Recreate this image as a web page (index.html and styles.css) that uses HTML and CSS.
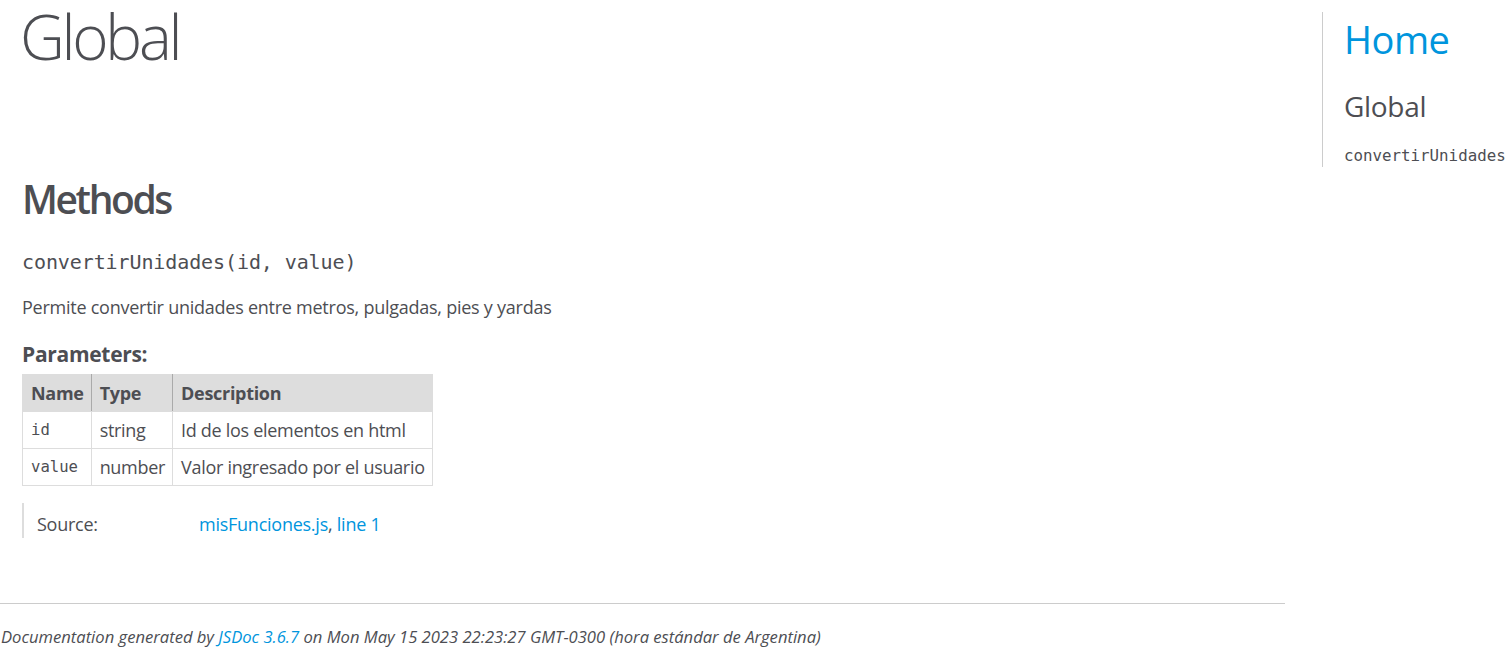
FILE: index.html
```html
<!DOCTYPE html>
<html lang="es">
<head>
<meta charset="utf-8">
<title>JSDoc: Global</title>
<link rel="stylesheet" href="styles.css">
</head>
<body>
<div class="page">
  <div class="main">
    <h1 class="page-title">Global</h1>
    <section class="doc">
      <h3 class="subsection-title">Methods</h3>
      <h4 class="name">convertirUnidades<span class="signature">(id, value)</span></h4>
      <p class="description">Permite convertir unidades entre metros, pulgadas, pies y yardas</p>
      <h5 class="params-title">Parameters:</h5>
      <table class="params">
        <thead>
          <tr><th>Name</th><th>Type</th><th class="last">Description</th></tr>
        </thead>
        <tbody>
          <tr><td class="pname">id</td><td>string</td><td>Id de los elementos en html</td></tr>
          <tr><td class="pname">value</td><td>number</td><td>Valor ingresado por el usuario</td></tr>
        </tbody>
      </table>
      <dl class="details">
        <dt class="tag-source">Source:</dt>
        <dd class="tag-source"><a href="#">misFunciones.js</a>, <a href="#">line 1</a></dd>
      </dl>
    </section>
  </div>
  <nav class="nav">
    <h2 class="nav-home"><a href="#">Home</a></h2>
    <h3 class="nav-group">Global</h3>
    <ul class="nav-list">
      <li><a href="#">convertirUnidades</a></li>
    </ul>
  </nav>
</div>
<footer class="footer">Documentation generated by <a href="#">JSDoc 3.6.7</a> on Mon May 15 2023 22:23:27 GMT-0300 (hora estándar de Argentina)</footer>
</body>
</html>
```

FILE: styles.css
```css
html, body {
  margin: 0;
  padding: 0;
  background: #fff;
  overflow: hidden;
}
body {
  font-family: "Open Sans", "Liberation Sans", sans-serif;
  font-size: 18px;
  line-height: 28px;
  color: #4d4e53;
}
a, a:visited {
  color: #0095dd;
  text-decoration: none;
}
.page {
  display: flex;
  align-items: flex-start;
}
.main {
  flex: none;
  width: 1322px;
}
.page-title {
  margin: 0 0 0 20px;
  font-size: 62px;
  line-height: 72px;
  font-weight: 300;
  letter-spacing: -3.3px;
}
.doc {
  margin-right: 37px;
  padding: 96.5px 0 65px 22px;
  border-bottom: 1px solid #ccc;
}
.subsection-title {
  margin: 0;
  font-size: 39px;
  line-height: 60px;
  font-weight: 600;
  letter-spacing: -2.4px;
}
.name {
  margin: 15.5px 0 0;
  font-family: "DejaVu Sans Mono", monospace;
  font-size: 20px;
  line-height: 36px;
  font-weight: 400;
  letter-spacing: -0.1px;
}
.description {
  margin: 13px 0 0;
  letter-spacing: -0.25px;
}
.params-title {
  margin: 17px 0 0;
  font-size: 21px;
  line-height: 33.6px;
  font-weight: 700;
  letter-spacing: -0.3px;
}
.params {
  margin-top: 2.9px;
  border-collapse: collapse;
  border-spacing: 0;
}
.params th,
.params td {
  border: 1px solid #ddd;
  padding: 4px 7px 4px 8px;
  text-align: left;
  vertical-align: top;
  line-height: 28px;
  letter-spacing: -0.3px;
}
.params thead tr {
  background: #ddd;
}
.params th {
  font-weight: 700;
  border-right: 1px solid #aaa;
}
.params th.last {
  border-right: 1px solid #ddd;
}
.params td.pname {
  font-family: "DejaVu Sans Mono", monospace;
  font-size: 15.6px;
  letter-spacing: 0;
}
.details {
  display: flex;
  margin: 17px 0 0;
  padding-top: 7px;
  border-left: 2px solid #ddd;
  letter-spacing: -0.25px;
}
.details dt {
  width: 160px;
  padding-left: 13px;
  flex: none;
}
.details dd {
  margin: 0 0 0 2px;
}
.nav {
  flex: none;
  width: 189px;
  box-sizing: border-box;
  margin-top: 12px;
  border-left: 1px solid #ccc;
  padding-left: 21px;
}
.nav-home {
  margin: 3px 0 0;
  font-size: 38px;
  line-height: 48px;
  font-weight: 400;
  letter-spacing: -0.5px;
}
.nav-group {
  margin: 21.8px 0 0;
  font-size: 28px;
  line-height: 42px;
  font-weight: 400;
  letter-spacing: -0.3px;
}
.nav-list {
  list-style: none;
  margin: 16.7px 0 0;
  padding: 0;
  white-space: nowrap;
}
.nav-list a {
  font-family: "DejaVu Sans Mono", monospace;
  font-size: 15.8px;
  line-height: 22px;
  color: #4d4e53;
}
.nav-list li {
  line-height: 22px;
}
.footer {
  padding: 20px 0 0 1px;
  font-style: italic;
  font-size: 16.6px;
  line-height: 25.2px;
}
```
